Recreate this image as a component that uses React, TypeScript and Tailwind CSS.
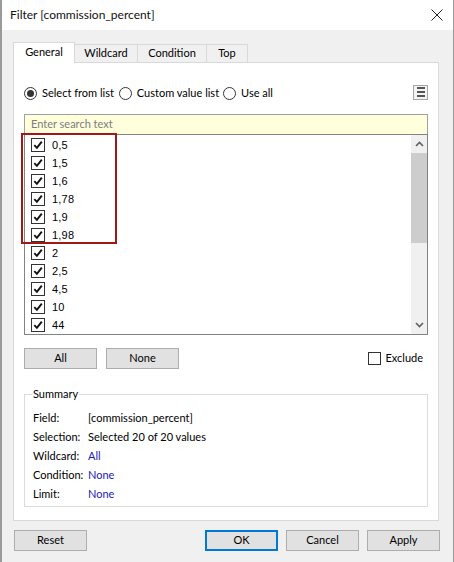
import React from "react";

const values = ["0,5", "1,5", "1,6", "1,78", "1,9", "1,98", "2", "2,5", "4,5", "10", "44"];

function Check() {
  return (
    <div className="w-[14px] h-[14px] border border-[#333333] bg-white flex items-center justify-center shrink-0">
      <svg width="10" height="10" viewBox="0 0 10 10">
        <path d="M1.3 5.2 L3.9 7.9 L8.8 1.6" fill="none" stroke="#111" strokeWidth="1.9" />
      </svg>
    </div>
  );
}

function Radio({ on }: { on?: boolean }) {
  return (
    <div className="w-[13px] h-[13px] rounded-full border border-[#333333] bg-white flex items-center justify-center shrink-0">
      {on && <div className="w-[7px] h-[7px] rounded-full bg-[#333333]" />}
    </div>
  );
}

function Btn({ children, w = "w-[73px]", ok }: { children: React.ReactNode; w?: string; ok?: boolean }) {
  return (
    <div
      className={`${w} h-[21px] flex items-center justify-center bg-[#e1e1e1] text-[#000] ${
        ok ? "border-2 border-[#0078d7]" : "border border-[#adadad]"
      }`}
    >
      {children}
    </div>
  );
}

export default function App() {
  return (
    <div className="w-[454px] h-[562px] bg-[#f0f0f0] border-l-2 border-r border-[#9a9a9a] font-['Segoe_UI','Lato',sans-serif] text-[11px] text-black overflow-hidden">
      {/* Title bar */}
      <div className="h-[30px] bg-white flex items-center justify-between pl-[8px] pr-[10px]">
        <span className="text-[12px] text-[#111]">Filter [commission_percent]</span>
        <svg width="12" height="12" viewBox="0 0 12 12" className="mt-[-1px]">
          <path d="M0.5 0.5 L11.5 11.5 M11.5 0.5 L0.5 11.5" stroke="#222" strokeWidth="1" />
        </svg>
      </div>

      {/* Tabs */}
      <div className="flex items-end ml-[11px] mt-[11px] h-[21px]">
        <div className="w-[62px] h-[21px] bg-white border border-b-0 border-[#d9d9d9] flex items-center justify-center pb-[2px] relative z-10 mb-[-1px]">
          General
        </div>
        <div className="w-[63px] h-[18px] border border-l-0 border-b-0 border-[#d9d9d9] flex items-center justify-center">
          Wildcard
        </div>
        <div className="w-[69px] h-[18px] border border-l-0 border-b-0 border-[#d9d9d9] flex items-center justify-center">
          Condition
        </div>
        <div className="w-[41px] h-[18px] border border-l-0 border-b-0 border-[#d9d9d9] flex items-center justify-center">
          Top
        </div>
      </div>

      {/* Panel */}
      <div className="ml-[11px] w-[426px] h-[459px] bg-white border border-[#d9d9d9] px-[10px]">
        {/* Radio row */}
        <div className="mt-[22px] h-[16px] flex items-center justify-between">
          <div className="flex items-center">
            <Radio on />
            <span className="ml-[5px]">Select from list</span>
            <span className="ml-[5px]"><Radio /></span>
            <span className="ml-[5px]">Custom value list</span>
            <span className="ml-[4px]"><Radio /></span>
            <span className="ml-[5px]">Use all</span>
          </div>
          <div className="w-[15px] h-[15px] border border-[#a5a5a5] bg-[#f4f4f4] flex flex-col items-center justify-center gap-[2px] mt-[-2px]">
            <div className="w-[8px] h-[2px] bg-[#555]" />
            <div className="w-[8px] h-[2px] bg-[#555]" />
            <div className="w-[8px] h-[2px] bg-[#555]" />
          </div>
        </div>

        {/* Search + list */}
        <div className="relative mt-[13px]">
          <div className="h-[20px] bg-[#ffffdc] border border-b-0 border-[#a0a0a0] flex items-center pl-[6px] text-[#7d7d7d]">
            Enter search text
          </div>
          <div className="h-[201px] border border-[#828282] flex bg-white">
            <div className="flex-1 pt-[1px] pl-[6px] font-['Liberation_Sans',Arial,sans-serif] text-[11px]">
              {values.map((v) => (
                <div key={v} className="h-[18px] flex items-center">
                  <Check />
                  <span className="ml-[7px] tracking-[0.2px]">{v}</span>
                </div>
              ))}
            </div>
            <div className="w-[16px] bg-[#f0f0f0] flex flex-col items-center">
              <div className="h-[18px] flex items-center justify-center">
                <svg width="9" height="6" viewBox="0 0 9 6">
                  <path d="M1 5 L4.5 1.5 L8 5" fill="none" stroke="#606060" strokeWidth="1.6" />
                </svg>
              </div>
              <div className="w-full h-[90px] bg-[#cdcdcd]" />
              <div className="flex-1" />
              <div className="h-[18px] flex items-center justify-center">
                <svg width="9" height="6" viewBox="0 0 9 6">
                  <path d="M1 1 L4.5 4.5 L8 1" fill="none" stroke="#606060" strokeWidth="1.6" />
                </svg>
              </div>
            </div>
          </div>
          {/* red highlight */}
          <div className="absolute left-[-3px] top-[19px] w-[96px] h-[111px] border-2 border-[#a01818] pointer-events-none" />
        </div>

        {/* All / None / Exclude */}
        <div className="mt-[13px] flex items-center">
          <Btn w="w-[73px]">All</Btn>
          <div className="ml-[9px]">
            <Btn w="w-[73px]">None</Btn>
          </div>
          <div className="ml-auto mr-[5px] flex items-center">
            <div className="w-[13px] h-[13px] border border-[#333] bg-white" />
            <span className="ml-[4px]">Exclude</span>
          </div>
        </div>

        {/* Summary */}
        <fieldset className="mt-[17px] w-[404px] border border-[#dcdcdc] pl-[8px] pt-[7px] pb-[2px]">
          <legend className="ml-[-1px] px-[1px] leading-[16px]">Summary</legend>
          {[
            ["Field:", "[commission_percent]", false],
            ["Selection:", "Selected 20 of 20 values", false],
            ["Wildcard:", "All", true],
            ["Condition:", "None", true],
            ["Limit:", "None", true],
          ].map(([k, v, blue]) => (
            <div key={k as string} className="h-[19px] flex items-center">
              <span className="w-[55px]">{k}</span>
              <span className={blue ? "text-[#1a1ab8]" : ""}>{v}</span>
            </div>
          ))}
        </fieldset>
      </div>

      {/* Bottom buttons */}
      <div className="mt-[9px] flex items-center pl-[12px]">
        <Btn>Reset</Btn>
        <div className="ml-[118px]">
          <Btn ok>OK</Btn>
        </div>
        <div className="ml-[8px]">
          <Btn>Cancel</Btn>
        </div>
        <div className="ml-[8px]">
          <Btn>Apply</Btn>
        </div>
      </div>
    </div>
  );
}
